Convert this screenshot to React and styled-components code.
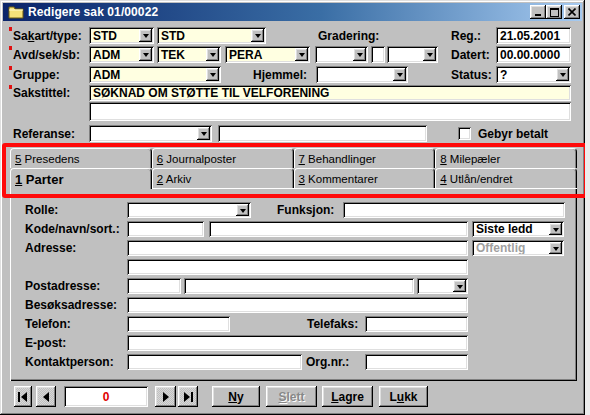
import React from 'react'
import styled, { createGlobalStyle, css } from 'styled-components'

const GlobalStyle = createGlobalStyle`
  body {
    margin: 0;
    background: #ececec;
    font-family: "Liberation Sans", Arial, sans-serif;
  }
`

const sunken = css`
  box-shadow: inset 1px 1px #808080, inset -1px -1px #ffffff, inset 2px 2px #000000, inset -2px -2px #dfdfdf;
`
const raised = css`
  box-shadow: inset -1px -1px #000000, inset 1px 1px #ffffff, inset -2px -2px #808080, inset 2px 2px #dfdfdf;
`

const Window = styled.div`
  width: 585px;
  height: 415px;
  box-sizing: border-box;
  padding: 3px;
  background: #c0c0c0;
  box-shadow: inset -1px -1px #000, inset 1px 1px #dfdfdf, inset -2px -2px #808080, inset 2px 2px #fff;
  overflow: hidden;
`

const TitleBar = styled.div`
  height: 18px;
  display: flex;
  align-items: center;
  padding: 0 2px 0 5px;
  background: linear-gradient(90deg, #0a246a 0%, #3a6ea5 55%, #a6caf0 100%);
  color: #fff;
  font-weight: bold;
  font-size: 12px;
  gap: 4px;
`

const TitleText = styled.span`
  flex: 1;
  letter-spacing: 0.1px;
`

const CtrlBtn = styled.div`
  width: 16px;
  height: 14px;
  background: #c0c0c0;
  ${raised};
  display: flex;
  align-items: center;
  justify-content: center;
  margin-left: ${p => p.$ml || 0}px;
`

const Row = styled.div`
  display: flex;
  align-items: stretch;
  height: ${p => p.$h || 17}px;
  margin-top: ${p => p.$mt || 0}px;
  padding-left: ${p => p.$pl || 0}px;
`

const Label = styled.span`
  position: relative;
  flex-shrink: 0;
  display: flex;
  align-items: center;
  width: ${p => p.$w}px;
  margin-left: ${p => p.$ml || 0}px;
  font-size: 12px;
  font-weight: bold;
  color: #000;
  white-space: pre;

  ${p => p.$req && css`
    &::before {
      content: '';
      position: absolute;
      left: -4px;
      top: 0;
      width: 3px;
      height: 4px;
      background: #e01010;
    }
  `}
`

const Field = styled.div`
  flex-shrink: 0;
  box-sizing: border-box;
  width: ${p => p.$w}px;
  margin-left: ${p => p.$ml || 0}px;
  background: ${p => (p.$yellow ? '#ffffe1' : '#ffffff')};
  ${sunken};
  display: flex;
  align-items: center;
  padding-left: 4px;
  font-size: 12px;
  font-weight: bold;
  color: #000;
  white-space: nowrap;
  overflow: hidden;
`

const Combo = styled.div`
  flex-shrink: 0;
  box-sizing: border-box;
  width: ${p => p.$w}px;
  margin-left: ${p => p.$ml || 0}px;
  background: ${p => (p.$yellow ? '#ffffe1' : '#ffffff')};
  ${sunken};
  display: flex;
  padding: 2px;
  font-size: 12px;
  font-weight: bold;
  color: ${p => (p.$disabled ? '#a0a0a0' : '#000')};
`

const ComboText = styled.span`
  flex: 1;
  display: flex;
  align-items: center;
  padding-left: 2px;
  white-space: nowrap;
  overflow: hidden;
`

const DropBtn = styled.span`
  width: 13px;
  flex-shrink: 0;
  background: #c0c0c0;
  ${raised};
  display: flex;
  align-items: center;
  justify-content: center;

  &::after {
    content: '';
    border-left: 3.5px solid transparent;
    border-right: 3.5px solid transparent;
    border-top: 4px solid #000;
    margin-top: 1px;
  }
`

const Check = styled.div`
  width: 13px;
  height: 13px;
  margin: 2px 0 0 ${p => p.$ml || 0}px;
  background: #fff;
  ${sunken};
  flex-shrink: 0;
`

const TabArea = styled.div`
  position: relative;
  width: 567px;
  margin: 6px 0 0 7px;
`

const Highlight = styled.div`
  position: absolute;
  left: -8px;
  top: -5px;
  width: 586px;
  height: 55px;
  box-sizing: border-box;
  border: 4px solid #ff0a0a;
  border-radius: 3px;
  z-index: 5;
  pointer-events: none;
`

const TabRow = styled.div`
  display: flex;
  height: 20px;
`

const Tab = styled.div`
  position: relative;
  flex: 1;
  box-sizing: border-box;
  display: flex;
  align-items: center;
  padding-left: 4px;
  background: #c0c0c0;
  border-top: 1px solid #fff;
  border-left: 1px solid #fff;
  border-right: 1px solid #000;
  border-radius: 4px 4px 0 0;
  box-shadow: inset -1px 0 #808080;
  font-size: 11.5px;
  color: #000;
  white-space: pre;

  ${p => p.$active && css`
    font-weight: bold;
    font-size: 13px;
    height: 21px;
    margin-bottom: -1px;
    z-index: 2;
  `}
`

const Panel = styled.div`
  box-sizing: border-box;
  height: 193px;
  padding: 14px 0 0 15px;
  background: #c0c0c0;
  box-shadow: inset 1px 1px #fff, inset -1px -1px #000, inset -2px -2px #808080;
  display: flex;
  flex-direction: column;
  gap: 3px;
`

const Toolbar = styled.div`
  display: flex;
  height: 21px;
  margin-top: 5px;
  padding-left: 11px;
`

const Btn = styled.div`
  flex-shrink: 0;
  box-sizing: border-box;
  width: ${p => p.$w}px;
  margin-left: ${p => p.$ml || 0}px;
  background: ${p => (p.$nav ? 'repeating-conic-gradient(#c0c0c0 0 25%, #d8d8d8 0 50%) 0 0 / 2px 2px' : '#c0c0c0')};
  ${raised};
  display: flex;
  align-items: center;
  justify-content: center;
  font-size: 12px;
  font-weight: bold;
  color: ${p => (p.$disabled ? '#888' : '#000')};
  text-shadow: ${p => (p.$disabled ? '1px 1px #fff' : 'none')};
`

const Counter = styled.div`
  box-sizing: border-box;
  width: 84px;
  margin-left: ${p => p.$ml || 0}px;
  background: #fff;
  ${sunken};
  display: flex;
  align-items: center;
  justify-content: center;
  color: #e00000;
  font-weight: bold;
  font-size: 12px;
`

function Folder() {
  return (
    <svg width="16" height="14" viewBox="0 0 16 14">
      <path d="M1 2h5l1 2h8v9H1z" fill="#f4e27a" stroke="#6b5a10" strokeWidth="1" />
      <path d="M1 5h14" stroke="#fffbd0" strokeWidth="1" />
    </svg>
  )
}

function NavIcon({ dir, end }) {
  const left = dir === 'left'
  return (
    <svg width="12" height="12" viewBox="0 0 12 12">
      {left ? (
        <>
          {end && <rect x="1" y="1" width="2" height="10" fill="#000" />}
          <polygon points={end ? '10,1 4,6 10,11' : '9,1 3,6 9,11'} fill="#000" />
        </>
      ) : (
        <>
          <polygon points={end ? '2,1 8,6 2,11' : '3,1 9,6 3,11'} fill="#000" />
          {end && <rect x="9" y="1" width="2" height="10" fill="#000" />}
        </>
      )}
    </svg>
  )
}

function Drop({ w, ml, yellow, disabled, children }) {
  return (
    <Combo $w={w} $ml={ml} $yellow={yellow} $disabled={disabled}>
      <ComboText>{children}</ComboText>
      <DropBtn />
    </Combo>
  )
}

const topTabs = [
  ['5', 'Presedens'],
  ['6', 'Journalposter'],
  ['7', 'Behandlinger'],
  ['8', 'Milepæler'],
]
const bottomTabs = [
  ['1', 'Parter'],
  ['2', 'Arkiv'],
  ['3', 'Kommentarer'],
  ['4', 'Utlån/endret'],
]

export default function App() {
  return (
    <>
      <GlobalStyle />
      <Window>
        <TitleBar>
          <Folder />
          <TitleText>Redigere sak 01/00022</TitleText>
          <CtrlBtn>
            <svg width="8" height="8" viewBox="0 0 8 8"><rect x="1" y="6" width="6" height="2" fill="#000" /></svg>
          </CtrlBtn>
          <CtrlBtn $ml={-4}>
            <svg width="9" height="9" viewBox="0 0 9 9"><rect x="0.5" y="0.5" width="8" height="8" fill="none" stroke="#000" /><rect x="0" y="0" width="9" height="2" fill="#000" /></svg>
          </CtrlBtn>
          <CtrlBtn $ml={-2}>
            <svg width="8" height="8" viewBox="0 0 8 8"><path d="M0.5 0.5l7 7M7.5 0.5l-7 7" stroke="#000" strokeWidth="1.6" /></svg>
          </CtrlBtn>
        </TitleBar>

        <Row $mt={6} $pl={10}>
          <Label $w={76} $req><span>Sa<u>k</u>art/type:</span></Label>
          <Drop w={65} yellow>STD</Drop>
          <Drop w={109} ml={3} yellow>STD</Drop>
          <Label $w={133} $ml={52}>Gradering:</Label>
          <Label $w={45}>Reg.:</Label>
          <Field $w={75}>21.05.2001</Field>
        </Row>

        <Row $mt={2} $pl={10}>
          <Label $w={76} $req>Avd/sek/sb:</Label>
          <Drop w={65} yellow>ADM</Drop>
          <Drop w={64} ml={3} yellow>TEK</Drop>
          <Drop w={85} ml={4} yellow>PERA</Drop>
          <Drop w={53} ml={5} />
          <Field $w={14} $ml={3} />
          <Drop w={51} ml={2} />
          <Label $w={45} $ml={13}>Datert:</Label>
          <Field $w={75}>00.00.0000</Field>
        </Row>

        <Row $mt={3} $pl={10}>
          <Label $w={76} $req>Gruppe:</Label>
          <Drop w={132} yellow>ADM</Drop>
          <Label $w={63} $ml={32}>Hjemmel:</Label>
          <Drop w={92} />
          <Label $w={45} $ml={43}>Status:</Label>
          <Drop w={75}>?</Drop>
        </Row>

        <Row $mt={2} $h={16} $pl={10}>
          <Label $w={76} $req>Sakstittel:</Label>
          <Field $w={482} $yellow>SØKNAD OM STØTTE TIL VELFORENING</Field>
        </Row>

        <Row $mt={1} $h={19} $pl={86}>
          <Field $w={482} />
        </Row>

        <Row $mt={4} $pl={10}>
          <Label $w={76}>Referanse:</Label>
          <Drop w={123} />
          <Field $w={209} $ml={6} />
          <Check $ml={31} />
          <Label $w={80} $ml={7}>Gebyr betalt</Label>
        </Row>

        <TabArea>
          <Highlight />
          <TabRow>
            {topTabs.map(([n, t]) => (
              <Tab key={n}><span><u>{n}</u> {t}</span></Tab>
            ))}
          </TabRow>
          <TabRow>
            {bottomTabs.map(([n, t]) => (
              <Tab key={n} $active={n === '1'}><span><u>{n}</u> {t}</span></Tab>
            ))}
          </TabRow>
          <Panel>
            <Row $h={16}>
              <Label $w={102}>Rolle:</Label>
              <Drop w={124} />
              <Label $w={66} $ml={26}>Funksjon:</Label>
              <Field $w={222} />
            </Row>
            <Row $h={16}>
              <Label $w={102}>Kode/navn/sort.:</Label>
              <Field $w={77} />
              <Field $w={259} $ml={5} />
              <Drop w={92} ml={4}>Siste ledd</Drop>
            </Row>
            <Row $h={16}>
              <Label $w={102}>Adresse:</Label>
              <Field $w={341} />
              <Drop w={92} ml={4} disabled>Offentlig</Drop>
            </Row>
            <Row $h={16} $pl={102}>
              <Field $w={341} />
            </Row>
            <Row $h={16}>
              <Label $w={102}>Postadresse:</Label>
              <Field $w={54} />
              <Field $w={230} $ml={3} />
              <Drop w={51} ml={3} />
            </Row>
            <Row $h={16}>
              <Label $w={102}>Besøksadresse:</Label>
              <Field $w={341} />
            </Row>
            <Row $h={16}>
              <Label $w={102}>Telefon:</Label>
              <Field $w={103} />
              <Label $w={58} $ml={77}>Telefaks:</Label>
              <Field $w={103} />
            </Row>
            <Row $h={16}>
              <Label $w={102}>E-post:</Label>
              <Field $w={341} />
            </Row>
            <Row $h={16}>
              <Label $w={102}>Kontaktperson:</Label>
              <Field $w={175} />
              <Label $w={59} $ml={4}>Org.nr.:</Label>
              <Field $w={103} />
            </Row>
          </Panel>
        </TabArea>

        <Toolbar>
          <Btn $w={18} $nav><NavIcon dir="left" end /></Btn>
          <Btn $w={20} $ml={4} $nav><NavIcon dir="left" /></Btn>
          <Counter $ml={8}>0</Counter>
          <Btn $w={21} $ml={7} $nav><NavIcon dir="right" /></Btn>
          <Btn $w={20} $ml={2} $nav><NavIcon dir="right" end /></Btn>
          <Btn $w={48} $ml={14}><span><u>N</u>y</span></Btn>
          <Btn $w={51} $ml={6} $disabled><span><u>S</u>lett</span></Btn>
          <Btn $w={51} $ml={5}><span><u>L</u>agre</span></Btn>
          <Btn $w={49} $ml={6}><span>L<u>u</u>kk</span></Btn>
        </Toolbar>
      </Window>
    </>
  )
}
